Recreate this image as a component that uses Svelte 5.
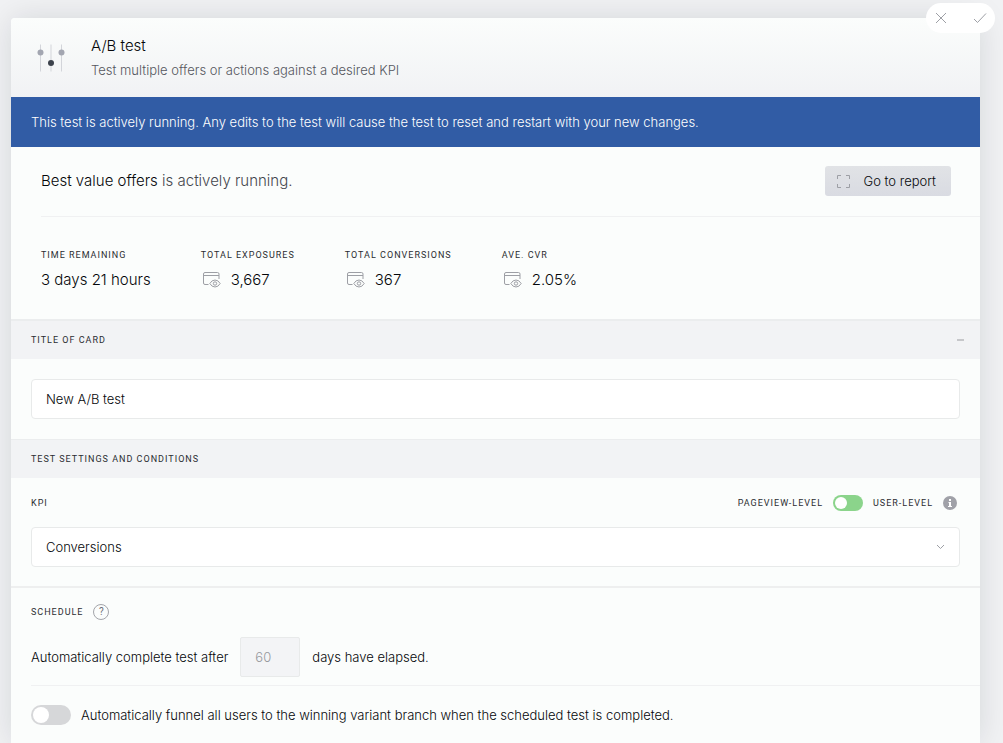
<!-- Editor panel for an A/B test card: live stats, title, KPI and schedule. -->
<script lang="ts">
  interface Stat {
    label: string
    value: string
    icon: boolean
  }

  const stats: Stat[] = [
    { label: 'Time remaining', value: '3 days 21 hours', icon: false },
    { label: 'Total exposures', value: '3,667', icon: true },
    { label: 'Total conversions', value: '367', icon: true },
    { label: 'Ave. CVR', value: '2.05%', icon: true },
  ]

  let title = $state('New A/B test')
  let kpi = $state('Conversions')
  let userLevel = $state(false)
  let days = $state('60')
  let autoFunnel = $state(false)
  let titleOpen = $state(true)
</script>

<div class="page">
  <main class="card">
    <div class="card-actions">
      <button class="icon-btn" aria-label="Cancel">
        <svg width="12" height="12" viewBox="0 0 12 12"><path d="M1 1l10 10M11 1L1 11" /></svg>
      </button>
      <button class="icon-btn" aria-label="Save">
        <svg width="14" height="12" viewBox="0 0 14 12"><path d="M1 7l3.5 3.5L13 1.5" /></svg>
      </button>
    </div>

    <header class="card-header">
      <svg class="sliders" width="28" height="28" viewBox="0 0 28 28" aria-hidden="true">
        <path d="M3.5 0.5v27M14 0.5v27M24.5 0.5v27" stroke="#d3d5da" fill="none" />
        <circle cx="3.5" cy="8.5" r="3" fill="#a3a6b1" />
        <circle cx="14" cy="19" r="3" fill="#3c424c" />
        <circle cx="24.5" cy="8.5" r="3" fill="#a3a6b1" />
      </svg>
      <div>
        <h1>A/B test</h1>
        <p>Test multiple offers or actions against a desired KPI</p>
      </div>
    </header>

    <div class="banner" role="status">
      This test is actively running. Any edits to the test will cause the test to reset and restart with your new changes.
    </div>

    <section class="summary">
      <div class="summary-top">
        <p><strong>Best value offers</strong> is actively running.</p>
        <button class="report-btn">
          <svg width="13" height="13" viewBox="0 0 13 13" aria-hidden="true">
            <path d="M0.5 4V0.5H4M9 0.5h3.5V4M12.5 9v3.5H9M4 12.5H0.5V9" />
          </svg>
          Go to report
        </button>
      </div>
      <dl class="stats">
        {#each stats as stat (stat.label)}
          <div>
            <dt class="caps">{stat.label}</dt>
            <dd>
              {#if stat.icon}
                <svg width="18" height="16" viewBox="0 0 18 16" aria-hidden="true">
                  <path d="M5.5 12.5H2A1.5 1.5 0 0 1 .5 11V2A1.5 1.5 0 0 1 2 .5h12.5A1.5 1.5 0 0 1 16 2v5M.5 3.5H16" />
                  <path d="M6.8 11.5Q8.8 8 12 8t5.2 3.5Q15.2 15 12 15t-5.2-3.5z" />
                  <circle cx="12" cy="11.5" r="1.7" />
                </svg>
              {/if}
              {stat.value}
            </dd>
          </div>
        {/each}
      </dl>
    </section>

    <section>
      <div class="section-head">
        <h2 class="caps"><label for="card-title">Title of card</label></h2>
        <button
          class="collapse-btn"
          aria-label="Toggle title section"
          aria-expanded={titleOpen}
          onclick={() => (titleOpen = !titleOpen)}
        ><span></span></button>
      </div>
      {#if titleOpen}
        <div class="section-body">
          <input id="card-title" class="field" type="text" bind:value={title} />
        </div>
      {/if}
    </section>

    <section>
      <div class="section-head">
        <h2 class="caps">Test settings and conditions</h2>
      </div>
      <div class="kpi">
        <div class="kpi-row">
          <label class="caps" for="kpi">KPI</label>
          <div class="level">
            <span class="caps">Pageview-level</span>
            <input class="toggle small" type="checkbox" aria-label="User-level" bind:checked={userLevel} />
            <span class="caps">User-level</span>
            <svg class="info" width="14" height="14" viewBox="0 0 14 14" aria-hidden="true">
              <circle cx="7" cy="7" r="7" fill="#a0a1a8" />
              <path d="M6 3h2v2H6zM5.5 6H8v4h1v1H5v-1h1V7h-.5z" fill="#fff" />
            </svg>
          </div>
        </div>
        <div class="select-wrap">
          <select id="kpi" class="field" bind:value={kpi}>
            <option>Conversions</option>
            <option>Clicks</option>
          </select>
          <svg width="9" height="6" viewBox="0 0 9 6" aria-hidden="true"><path d="M1 1l3.5 3.5L8 1" /></svg>
        </div>
      </div>
    </section>

    <section class="schedule">
      <h2 class="caps">
        Schedule
        <button class="help" aria-label="About the schedule">?</button>
      </h2>
      <div class="elapsed">
        <label for="days">Automatically complete test after</label>
        <input id="days" class="field days" type="text" disabled bind:value={days} />
        <span>days have elapsed.</span>
      </div>
      <label class="funnel">
        <input class="toggle" type="checkbox" bind:checked={autoFunnel} />
        Automatically funnel all users to the winning variant branch when the scheduled test is completed.
      </label>
    </section>
  </main>
</div>

<style>
  :global(body) {
    margin: 0;
    background: #f1f2f4;
  }

  .page {
    box-sizing: border-box;
    min-height: 100vh;
    padding: 18px 23px 0 11px;
    display: flex;
    overflow: hidden;
    font-family: Inter, 'Liberation Sans', sans-serif;
    font-size: 13px;
    font-weight: 300;
    line-height: 20px;
    color: #05070a;
  }

  .card {
    position: relative;
    flex: 1;
    min-width: 0;
    background: #fbfdfc;
    border-radius: 4px 4px 0 0;
    box-shadow: 0 0 32px rgba(20, 22, 30, 0.12);
  }

  h1,
  h2,
  p,
  dl,
  dd {
    margin: 0;
    font-weight: inherit;
  }

  button {
    font: inherit;
    color: inherit;
    border: 0;
    padding: 0;
    background: none;
    cursor: pointer;
  }

  svg {
    flex-shrink: 0;
    fill: none;
    stroke: #9d9fa5;
  }

  .caps {
    font-family: Roboto, 'Liberation Sans', sans-serif;
    font-size: 9px;
    font-weight: 400;
    line-height: 20px;
    letter-spacing: 1px;
    text-transform: uppercase;
    color: #2b2d31;
  }

  /* Save and cancel, hanging over the card corner */
  .card-actions {
    position: absolute;
    top: -15px;
    right: -15px;
    display: flex;
    gap: 9px;
    background: #fff;
    border-radius: 15px;
  }

  .icon-btn {
    width: 30px;
    height: 30px;
    display: flex;
    align-items: center;
    justify-content: center;
  }

  /* Header */
  .card-header {
    display: flex;
    align-items: center;
    gap: 26px;
    padding: 16px 26px 15px;
    border-radius: 4px 4px 0 0;
    background: linear-gradient(#fbfdfc, #f1f2f4);
  }

  .card-header .sliders {
    stroke: none;
  }

  h1 {
    font-size: 15px;
    line-height: 24px;
  }

  .card-header p {
    line-height: 24px;
    color: #55575e;
  }

  .banner {
    padding: 15px 20px;
    background: #315ca5;
    color: #fff;
  }

  /* Live results */
  .summary {
    padding: 0 0 28px 30px;
  }

  .summary-top {
    display: flex;
    align-items: center;
    justify-content: space-between;
    padding: 19px 29px 20px 0;
    border-bottom: 1px solid #f0f1f2;
    font-size: 15px;
    color: #44464d;
  }

  .summary-top strong {
    font-weight: inherit;
    color: #05070a;
  }

  .report-btn {
    display: flex;
    align-items: center;
    gap: 14px;
    height: 30px;
    padding: 0 15px 0 12px;
    border-radius: 3px;
    background: linear-gradient(#e1e3e6, #d9dbe2);
    font-size: 13px;
    color: #05070a;
  }

  .stats {
    display: flex;
    gap: 50px;
    padding-top: 28px;
  }

  .stats dd {
    display: flex;
    align-items: center;
    gap: 10px;
    margin-top: 4px;
    font-size: 15px;
    line-height: 22px;
  }

  .stats svg {
    margin-left: 2px;
  }

  /* Sections */
  .section-head {
    display: flex;
    align-items: center;
    justify-content: space-between;
    padding: 9px 15px 9px 20px;
    border-top: 1px solid #ebedee;
    background: #f2f3f5;
  }

  .summary + section .section-head {
    border-top-width: 2px;
  }

  .collapse-btn {
    width: 8px;
    height: 20px;
  }

  .collapse-btn span {
    display: block;
    width: 7px;
    height: 2px;
    background: #c6c7ca;
  }

  .section-body {
    padding: 20px;
  }

  .field {
    box-sizing: border-box;
    display: block;
    width: 100%;
    height: 40px;
    padding: 0 14px;
    border: 1px solid #e8eaea;
    border-radius: 4px;
    background: #fff;
    font: inherit;
    color: inherit;
    appearance: none;
  }

  .kpi {
    padding: 15px 20px 19px;
  }

  .kpi-row,
  .level {
    display: flex;
    align-items: center;
  }

  .kpi-row {
    justify-content: space-between;
    margin-bottom: 14px;
  }

  .level {
    gap: 10px;
    padding-right: 3px;
  }

  .info {
    stroke: none;
  }

  .select-wrap {
    position: relative;
  }

  .select-wrap svg {
    position: absolute;
    right: 15px;
    top: 17px;
    pointer-events: none;
  }

  .toggle {
    appearance: none;
    flex-shrink: 0;
    width: 40px;
    height: 20px;
    margin: 0;
    padding: 2px;
    box-sizing: border-box;
    border-radius: 10px;
    background: #d6d7d9;
    cursor: pointer;
  }

  .toggle::before {
    content: '';
    display: block;
    width: 16px;
    height: 16px;
    border-radius: 50%;
    background: #fff;
  }

  .toggle:checked::before {
    margin-left: auto;
  }

  .toggle.small {
    width: 30px;
    height: 16px;
    background: #8bd48b;
  }

  .toggle.small::before {
    width: 12px;
    height: 12px;
  }

  /* Schedule */
  .schedule {
    padding: 14px 0 18px 20px;
    border-top: 2px solid #eeefef;
  }

  .schedule h2 {
    display: flex;
    align-items: center;
    gap: 10px;
  }

  .help {
    box-sizing: border-box;
    width: 16px;
    height: 16px;
    border: 1px solid #a3a5aa;
    border-radius: 50%;
    font-size: 10px;
    line-height: 14px;
    letter-spacing: 0;
    text-align: center;
    color: #6d6f76;
  }

  .elapsed {
    display: flex;
    align-items: center;
    gap: 12px;
    padding: 15px 0 8px;
    border-bottom: 1px solid #f0f1f2;
  }

  .days {
    width: 60px;
    border-radius: 2px;
    background: #f3f4f6;
    color: #96989d;
  }

  .funnel {
    display: flex;
    align-items: center;
    gap: 10px;
    padding-top: 19px;
  }
</style>
